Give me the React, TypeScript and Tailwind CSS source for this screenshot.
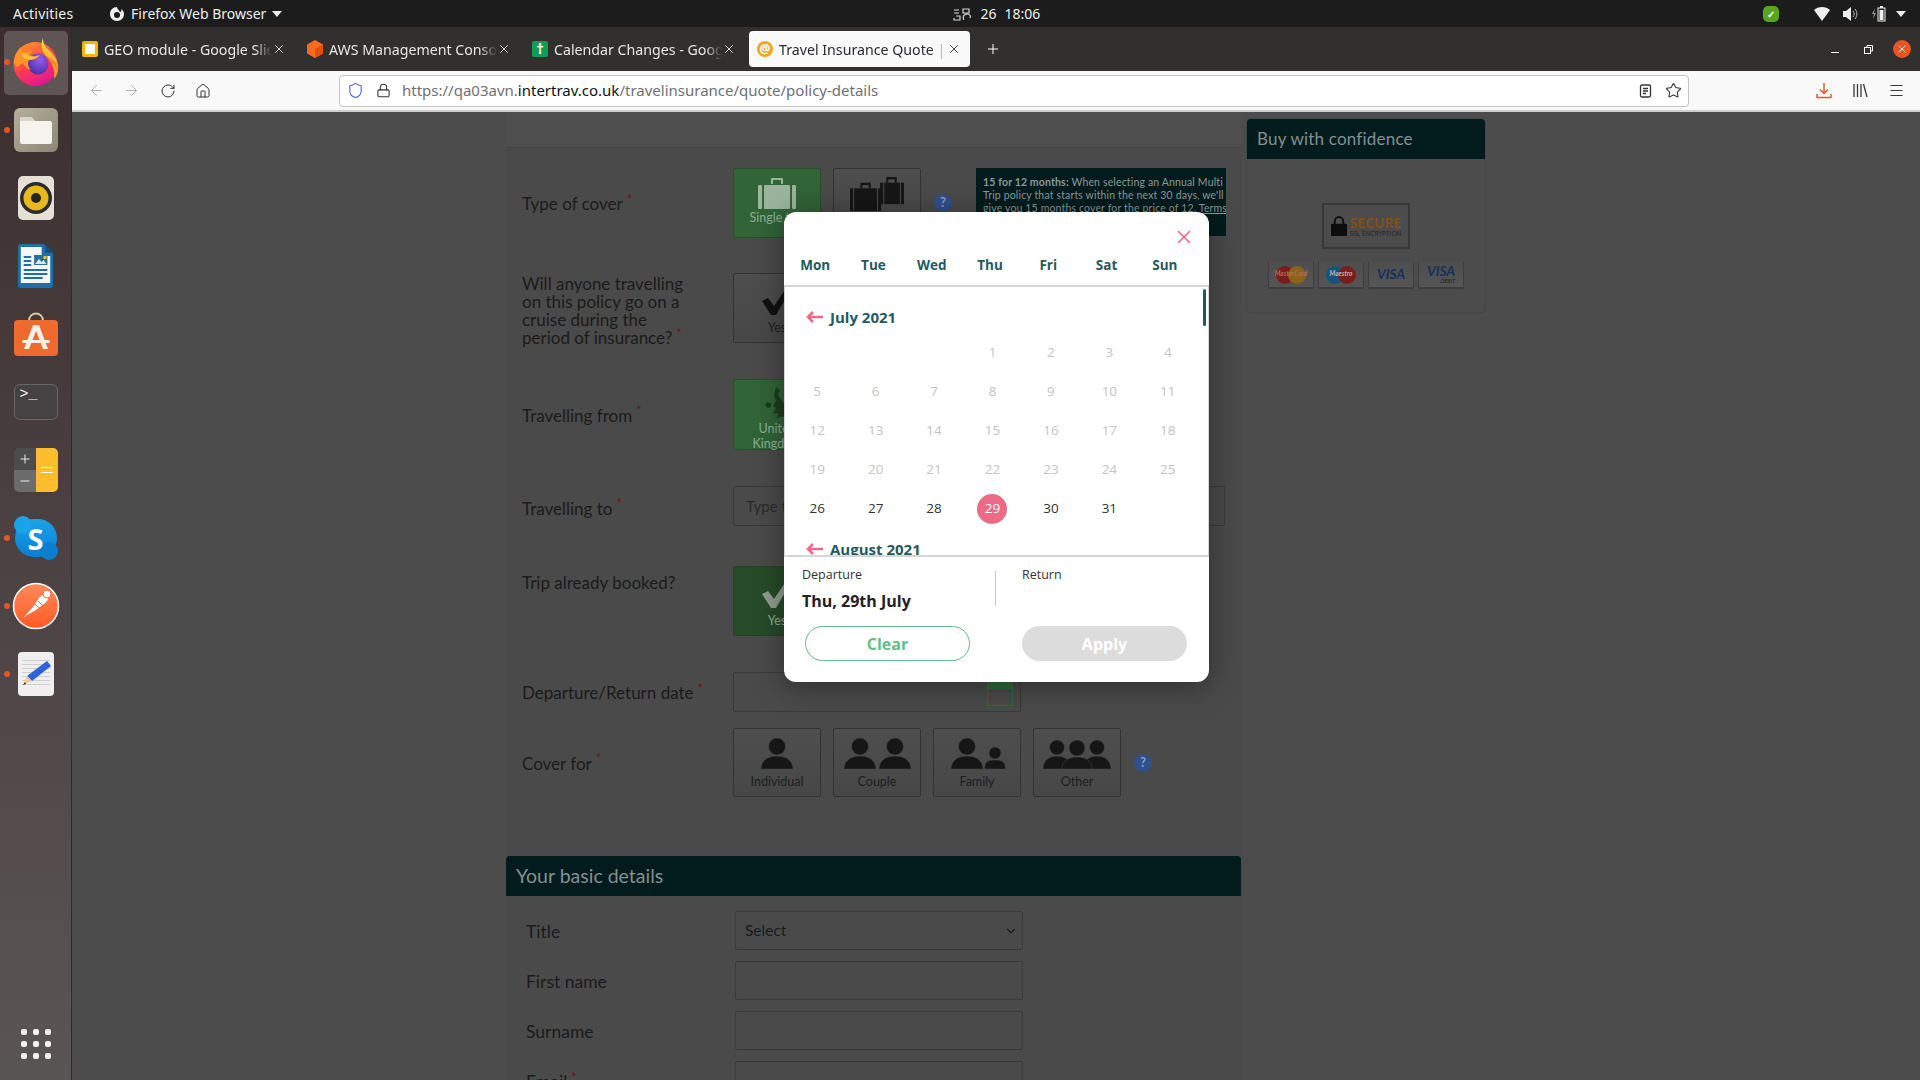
import { ReactNode } from "react";
import { ArrowLeft, ArrowRight, ChevronDown, House, Lock, Menu, Minus, Plus, RotateCw, Shield, Star, X } from "lucide-react";

const UI_FONT = "font-['Noto_Sans','Open_Sans',sans-serif]";
const SITE_FONT = "font-['Lato','Open_Sans',sans-serif]";
const MODAL_FONT = "font-['Open_Sans',sans-serif]";

function FirefoxIcon() {
  return (
    <svg width="46" height="50" viewBox="0 0 46 50">
      <defs>
        <linearGradient id="ffBody" x1="0.2" y1="0" x2="0.7" y2="1">
          <stop offset="0" stopColor="#ff9a1f" />
          <stop offset="0.5" stopColor="#ff3f4d" />
          <stop offset="1" stopColor="#e0119b" />
        </linearGradient>
        <radialGradient id="ffGlobe" cx="0.6" cy="0.3" r="0.8">
          <stop offset="0" stopColor="#8f5cf0" />
          <stop offset="1" stopColor="#4b2a9a" />
        </radialGradient>
        <linearGradient id="ffFlame" x1="0" y1="0" x2="0" y2="1">
          <stop offset="0" stopColor="#ffe23c" />
          <stop offset="1" stopColor="#ff9a1f" />
        </linearGradient>
      </defs>
      <circle cx="22.5" cy="27" r="22" fill="url(#ffBody)" />
      <path d="M30 1c0 7 3 10 8 14 5 5 8 11 7 19-1-7-5-12-11-14-5-5-7-12-4-19z" fill="url(#ffFlame)" />
      <path d="M34 20c6 3 10 8 11 14-1 3-2 6-4 8 1-8-1-15-7-22z" fill="#ff9a1f" />
      <circle cx="25" cy="27" r="10.500" fill="url(#ffGlobe)" />
      <path d="M1 26c0-7 3-12 7-16 0 3 0 5 2 6 3-2 7-2 10-1-2 1-4 3-5 4 4 1 8 0 12-1-2 4-7 5-11 5-2 3-1 7 2 10-4-1-7-4-8-7-2 1-4 2-5 4-2-1-3-2-4-4z" fill="#ff9428" />
      <path d="M8 17c3-1 6 0 9 2 3 1 6 1 8 0-3 3-7 4-11 3-2 0-4-2-6-5z" fill="#ffc040" />
    </svg>
  );
}

function FilesIcon() {
  return (
    <div className="flex h-[44px] w-[44px] items-center justify-center rounded-[6px] bg-linear-to-br from-[#b5b09c] to-[#8c8774]">
      <svg width="32" height="28" viewBox="0 0 32 28">
        <path d="M0 3a2 2 0 0 1 2-2h9l4 4h15a2 2 0 0 1 2 2v19a2 2 0 0 1-2 2H2a2 2 0 0 1-2-2z" fill="#f6f3ef" />
        <path d="M0 3a2 2 0 0 1 2-2h9l4 4H0z" fill="#d9d5cc" />
      </svg>
    </div>
  );
}

function RhythmboxIcon() {
  return (
    <div className="flex h-[44px] w-[36px] items-center justify-center rounded-[5px] bg-[#e5e1d6]">
      <svg width="32" height="32" viewBox="0 0 32 32">
        <circle cx="16" cy="16" r="16" fill="#2b2a30" />
        <circle cx="16" cy="16" r="12.5" fill="#e7b91e" />
        <circle cx="16" cy="16" r="5" fill="#26241f" />
      </svg>
    </div>
  );
}

function WriterIcon() {
  return (
    <svg width="36" height="44" viewBox="0 0 38 44" preserveAspectRatio="none">
      <path d="M3 0h24l10 10v31a3 3 0 0 1-3 3H3a3 3 0 0 1-3-3V3a3 3 0 0 1 3-3z" fill="#1c6fa8" />
      <path d="M3 3h22v9h9v27H3z" fill="#f4f6f7" />
      <path d="M29 0l9 9h-9z" fill="#14507c" />
      <rect x="6" y="12" width="8" height="2" fill="#1c6fa8" />
      <rect x="6" y="16" width="8" height="2" fill="#1c6fa8" />
      <rect x="6" y="20" width="8" height="2" fill="#1c6fa8" />
      <rect x="6" y="25" width="25" height="2" fill="#1c6fa8" />
      <rect x="6" y="29" width="25" height="2" fill="#1c6fa8" />
      <rect x="6" y="33" width="20" height="2" fill="#1c6fa8" />
      <rect x="17" y="11" width="14" height="10" fill="#2a6f99" />
      <path d="M18 20l4-5 3 3 2-2 3 4z" fill="#dbe7ee" />
      <rect x="27" y="12" width="3" height="3" fill="#f2c230" />
    </svg>
  );
}

function StoreIcon() {
  return (
    <svg width="44" height="44" viewBox="0 0 44 44">
      <path d="M15 9c0-10 14-10 14 0" fill="none" stroke="#d9c5a4" strokeWidth="2" />
      <rect y="8" width="44" height="36" rx="4" fill="#ee6a2f" />
      <path d="M19 13h6l9 24h-5l-7-18-7 18h-5z" fill="#fdeee6" />
      <rect x="8" y="28" width="28" height="3" rx="1.5" fill="#fdeee6" />
    </svg>
  );
}

function CalculatorIcon() {
  return (
    <div className="flex h-[44px] w-[44px] overflow-hidden rounded-[5px]">
      <div className="flex w-[22px] flex-col">
        <div className="flex h-[22px] items-center justify-center bg-[#4c4c4c] text-white"><Plus size={14} strokeWidth={1.5} /></div>
        <div className="flex h-[22px] items-center justify-center bg-[#6c6c6c] text-white"><Minus size={14} strokeWidth={1.5} /></div>
      </div>
      <div className="flex w-[22px] flex-col items-center justify-center gap-[4px] bg-[#fdbd2c]">
        <div className="h-px w-[12px] bg-white" />
        <div className="h-px w-[12px] bg-white" />
      </div>
    </div>
  );
}

function SkypeIcon() {
  return (
    <div className="relative flex h-[38px] w-[42px] items-center justify-center rounded-[19px] bg-linear-to-b from-[#1aa3e8] to-[#0a7fd0]">
      <div className="absolute left-[-1px] top-[-3px] h-[18px] w-[18px] rounded-full bg-[#1aa3e8]" />
      <div className="absolute bottom-[-3px] right-[-1px] h-[18px] w-[18px] rounded-full bg-[#0a7fd0]" />
      <span className="relative font-['Open_Sans',sans-serif] text-[29px] font-bold leading-none text-white">S</span>
    </div>
  );
}

function PostmanIcon() {
  return (
    <svg width="48" height="48" viewBox="0 0 48 48">
      <defs>
        <linearGradient id="pmBody" x1="0" y1="0" x2="0" y2="1">
          <stop offset="0" stopColor="#ff8a5c" />
          <stop offset="1" stopColor="#ff5a24" />
        </linearGradient>
      </defs>
      <circle cx="24" cy="24" r="22.5" fill="url(#pmBody)" stroke="#fff" strokeWidth="1.5" />
      <path d="M11 36l10-11 6-9c2-3 6-4 8-2 2 2 1 5-2 7l-9 7-9 5z" fill="#fff" />
      <circle cx="35" cy="12" r="4" fill="#fff" stroke="#ff6a35" strokeWidth="1" />
      <path d="M23 22l5 5M26 19l5 5" stroke="#ff6a35" strokeWidth="1" />
    </svg>
  );
}

function EditorIcon() {
  return (
    <div className="relative h-[44px] w-[36px] rounded-[4px] bg-[#efefef]">
      <svg width="36" height="44" viewBox="0 0 36 44">
        {[8, 12, 16, 20, 24, 28, 32].map((y) => (
          <rect key={y} x="4" y={y} width="28" height="1" fill="#cfcfcf" />
        ))}
        <path d="M29 9l4 5-19 15-5-5z" fill="#2f62d8" />
        <path d="M9 24l5 5-9 4z" fill="#f2c9a0" />
        <path d="M7 30l-2 3 3-1z" fill="#333" />
      </svg>
    </div>
  );
}

function DockSlot({ children, running, active }: { children: ReactNode; running?: boolean; active?: boolean }) {
  return (
    <div className="relative flex h-[68px] w-full items-center justify-center">
      {active && <div className="absolute left-[4px] top-[3px] h-[64px] w-[64px] rounded-[5px] bg-[#5f5555]" />}
      <div className="relative">{children}</div>
      {running && <div className="absolute left-[4px] top-[31px] h-[6px] w-[6px] rounded-full bg-[#e95420]" />}
    </div>
  );
}

function Dock() {
  return (
    <aside className="flex h-full w-[72px] shrink-0 flex-col border-r border-[#2e2a2a] bg-linear-to-b from-[#3b2d2e] via-[#4c4243] to-[#5a5555] pt-[1px] pb-[21px]">
      <DockSlot running active><FirefoxIcon /></DockSlot>
      <DockSlot running><FilesIcon /></DockSlot>
      <DockSlot><RhythmboxIcon /></DockSlot>
      <DockSlot><WriterIcon /></DockSlot>
      <DockSlot><StoreIcon /></DockSlot>
      <DockSlot>
        <div className="h-[36px] w-[44px] rounded-[6px] border border-[#6a6666] bg-[#444242] px-[5px] font-['Liberation_Mono',monospace] text-[15px] leading-[20px] text-white">
          &gt;_
        </div>
      </DockSlot>
      <DockSlot><CalculatorIcon /></DockSlot>
      <DockSlot running><SkypeIcon /></DockSlot>
      <DockSlot running><PostmanIcon /></DockSlot>
      <DockSlot running><EditorIcon /></DockSlot>
      <div className="mt-auto grid grid-cols-3 gap-[6px] self-center">
        {Array.from({ length: 9 }).map((_, i) => (
          <div key={i} className="h-[6px] w-[6px] rounded-[2px] bg-[#f2f0f0]" />
        ))}
      </div>
    </aside>
  );
}

function TopBar() {
  return (
    <header className={`flex h-[27px] shrink-0 items-center bg-[#1c1c1c] pl-[13px] pr-[14px] text-[14px] text-[#eeeeec] ${UI_FONT}`}>
      <span className="w-[96px] tracking-[0.2px]">Activities</span>
      <svg width="16" height="16" viewBox="0 0 16 16" className="mr-[6px]">
        <path d="M8 1c-4 0-7 3-7 7s3 7 7 7 7-3 7-7c0-2-1-4-3-5 1 2 0 3-1 3-1-2-3-3-3-5z" fill="#eeeeec" />
        <circle cx="8" cy="9" r="3" fill="#1c1c1c" />
      </svg>
      <span>Firefox Web Browser</span>
      <svg width="10" height="6" viewBox="0 0 10 6" className="ml-[6px]"><path d="M0 0h10L5 6z" fill="#eeeeec" /></svg>
      <svg width="20" height="16" viewBox="0 0 20 16" className="ml-[670px] mr-[8px]" fill="none" stroke="#d6d6d6" strokeWidth="1.2">
        <path d="M2 4h5M2 7h5M4 10h4v4H2v-2M11 3h6v4h-6zM12 14c-2-3 0-6 3-6s4 2 3 4" />
      </svg>
      <span className="w-[24px]">26</span>
      <span>18:06</span>
      <div className="ml-auto flex items-center">
        <div className="mr-[35px] flex h-[16px] w-[16px] items-center justify-center rounded-[5px] bg-[#5aa51e] text-[10px] font-bold leading-none text-white">✓</div>
        <svg width="16" height="14" viewBox="0 0 16 14" className="mr-[13px]"><path d="M0 3c4-4 12-4 16 0l-8 11z" fill="#eeeeec" /></svg>
        <svg width="15" height="14" viewBox="0 0 15 14" className="mr-[14px]" fill="none"><path d="M0 4h3l5-4v14l-5-4H0z" fill="#eeeeec" /><path d="M10 4c1.500 2 1.500 4 0 6M12 2c2.500 3 2.500 7 0 10" stroke="#bdbdbd" /></svg>
        <svg width="14" height="16" viewBox="0 0 14 16" className="mr-[8px]" fill="none"><path d="M3 2L0 8h2l-1 5 3-6H2z" fill="#9a9a9a" /><rect x="6" y="2" width="7" height="13" stroke="#eeeeec" /><rect x="8" y="0" width="3" height="2" fill="#eeeeec" /><rect x="7.500" y="4" width="4" height="10" fill="#eeeeec" /></svg>
        <svg width="10" height="6" viewBox="0 0 10 6" className="ml-[2px]"><path d="M0 0h10L5 6z" fill="#eeeeec" /></svg>
      </div>
    </header>
  );
}

const tabs = [
  { title: "GEO module - Google Slides", icon: <div className="h-[16px] w-[16px] rounded-[2px] border-[3px] border-[#f7b500] bg-white" /> },
  { title: "AWS Management Console", icon: <svg width="16" height="18" viewBox="0 0 16 18"><path d="M8 0l8 4.500v9L8 18l-8-4.500v-9z" fill="#ff6a1f" /><path d="M8 9l8-4.500v9L8 18z" fill="#e0500f" /></svg> },
  { title: "Calendar Changes - Google", icon: <div className="flex h-[16px] w-[16px] items-center justify-center rounded-[2px] bg-[#0f9d58] text-[14px] font-bold leading-none text-white">†</div> },
];

function Tab({ title, icon, active }: { title: string; icon: ReactNode; active?: boolean }) {
  return (
    <div className={`flex h-[36px] w-[221px] shrink-0 items-center pl-[8px] pr-[9px] ${active ? "rounded-[4px] bg-[#f9f9fa] text-[#2a2a2e]" : "text-[#e6e6e6]"}`}>
      <div className="flex w-[22px] shrink-0 items-center">{icon}</div>
      <span className="min-w-0 flex-1 overflow-hidden whitespace-nowrap pt-[1px] text-[14.2px] [mask-image:linear-gradient(to_right,black_90%,transparent)]">{title}</span>
      <X size={14} strokeWidth={1.5} className="shrink-0" />
    </div>
  );
}

function TabBar() {
  return (
    <div className={`flex h-[44px] items-center bg-[#322f2f] pl-[2px] ${UI_FONT}`}>
      <div className="flex gap-[4px]">
        {tabs.map((t) => (
          <Tab key={t.title} title={t.title} icon={t.icon} />
        ))}
        <Tab
          active
          title="Travel Insurance Quote | Compare"
          icon={<div className="flex h-[16px] w-[16px] items-center justify-center rounded-full bg-[#f5a623] text-[12px] font-bold leading-none text-white">@</div>}
        />
      </div>
      <Plus size={16} strokeWidth={1.5} className="ml-[15px] text-white" />
      <div className="ml-auto flex items-center pr-[9px] text-white">
        <div className="mr-[25px] mt-[6px] h-px w-[8px] bg-white" />
        <svg width="9" height="9" viewBox="0 0 9 9" className="mr-[20px]" fill="none" stroke="#fff"><rect x="0.500" y="2.500" width="6" height="6" /><path d="M3 2V.500h5.500V6H7" /></svg>
        <div className="flex h-[18px] w-[18px] items-center justify-center rounded-full bg-[#e95420]"><X size={12} strokeWidth={2} /></div>
      </div>
    </div>
  );
}

function NavBar() {
  return (
    <div className={`flex h-[41px] items-center border-b-2 border-[#cfcfcf] bg-[#f9f9fa] ${UI_FONT}`}>
      <ArrowLeft size={17} strokeWidth={1.25} className="ml-[16px] text-[#a8a8aa]" />
      <ArrowRight size={17} strokeWidth={1.25} className="ml-[18px] text-[#a8a8aa]" />
      <RotateCw size={16} strokeWidth={1.5} className="ml-[20px] text-[#333]" />
      <House size={16} strokeWidth={1.5} className="ml-[19px] text-[#333]" />
      <div className="ml-[128px] flex h-[32px] w-[1350px] items-center rounded-[4px] border border-[#c4c4c4] bg-white">
        <Shield size={17} strokeWidth={1.5} className="ml-[7px] text-[#4a5fd8]" />
        <Lock size={15} strokeWidth={1.75} className="ml-[12px] text-[#333]" />
        <span className="ml-[11px] whitespace-nowrap text-[15px] text-[#6f6f74]">
          https://qa03avn.<span className="text-[#111]">intertrav.co.uk</span>/travelinsurance/quote/policy-details
        </span>
        <svg width="13" height="14" viewBox="0 0 13 14" className="ml-auto mr-[13px]" fill="none" stroke="#333" strokeWidth="1.300"><rect x="1.500" y="1" width="10" height="12" rx="1.500" /><path d="M4 4.500h5M4 7h5M4 9.500h3" /></svg>
        <Star size={17} strokeWidth={1.5} className="mr-[6px] text-[#333]" />
      </div>
      <svg width="16" height="17" viewBox="0 0 16 17" className="ml-[127px]" fill="none" stroke="#e9582a" strokeWidth="1.500"><path d="M8 1v10M4 7.500L8 11.500 12 7.500M1 12v3.500h14V12" /></svg>
      <svg width="15" height="15" viewBox="0 0 15 15" className="ml-[21px]" fill="none" stroke="#3a3a3a" strokeWidth="1.300"><path d="M1 1v13M4.500 1v13M8 1v13M10.500 1l3.500 13" /></svg>
      <Menu size={17} strokeWidth={1.5} className="ml-[20px] text-[#3a3a3a]" />
    </div>
  );
}

function Req() {
  return <sup className="ml-[4px] text-[13px] text-[#7c0a12]">*</sup>;
}

function Suitcase({ fill }: { fill: string }) {
  return (
    <svg width="38" height="32" viewBox="0 0 38 32" fill={fill}>
      <path d="M13 7V2a1 1 0 0 1 1-1h10a1 1 0 0 1 1 1v5h-2V3h-8v4z" />
      <rect x="0" y="8" width="4" height="24" rx="1" />
      <rect x="6" y="8" width="26" height="24" rx="1" />
      <rect x="34" y="8" width="4" height="24" rx="1" />
    </svg>
  );
}

function TwoSuitcases() {
  return (
    <svg width="54" height="34" viewBox="0 0 52 30" preserveAspectRatio="none" fill="#161616">
      <path d="M35 5V0h10v5h-2V2h-6v3z" />
      <rect x="29" y="5" width="3" height="19" />
      <rect x="33" y="5" width="15" height="19" />
      <rect x="49" y="5" width="3" height="19" />
      <path d="M10 10V5h10v5h-2V7h-6v3z" />
      <rect x="0" y="10" width="3" height="20" />
      <rect x="4" y="10" width="22" height="20" />
      <rect x="27" y="10" width="3" height="20" />
    </svg>
  );
}

function Person({ x, r, top, w, fill = "#161616" }: { x: number; r: number; top: number; w: number; fill?: string }) {
  const bodyTop = top + r * 2 + 1;
  return (
    <g fill={fill} stroke="#4d4d4d" strokeWidth="0.5">
      <circle cx={x} cy={top + r} r={r} />
      <path d={`M${x - w / 2} 31c0-8 ${w * 0.2}-${31 - bodyTop} ${w / 2}-${31 - bodyTop}s${w / 2} ${31 - bodyTop - 8} ${w / 2} ${31 - bodyTop}z`} />
    </g>
  );
}

function People({ kind }: { kind: "individual" | "couple" | "family" | "other" }) {
  return (
    <svg width="70" height="32" viewBox="0 0 70 32">
      {kind === "individual" && <Person x={35} r={8.500} top={0} w={32} />}
      {kind === "couple" && (
        <>
          <Person x={18} r={8.500} top={0} w={32} />
          <Person x={53} r={8.500} top={0} w={32} />
        </>
      )}
      {kind === "family" && (
        <>
          <Person x={25} r={8.500} top={0} w={32} />
          <Person x={53} r={6} top={9} w={21} />
        </>
      )}
      {kind === "other" && (
        <>
          <Person x={15} r={7.500} top={2} w={28} />
          <Person x={55} r={7.500} top={2} w={28} />
          <Person x={35} r={8} top={2} w={30} />
        </>
      )}
    </svg>
  );
}

function Tile({ label, selected, dark, raised, children }: { label: string; selected?: boolean; dark?: boolean; raised?: boolean; children: ReactNode }) {
  const tone = selected
    ? `${dark ? "border-[#224424] bg-[#274b28]" : "border-[#274f2a] bg-[#316437]"} text-[#8fae8f]`
    : "border-[#333] bg-linear-to-b from-[#4e4e4e] to-[#474747] text-[#1e1e1e]";
  return (
    <div className={`flex h-full w-[88px] shrink-0 flex-col items-center justify-between rounded-[2px] border px-1 pt-[7px] text-center text-[12.5px] leading-[15px] ${raised ? "pb-[12px]" : "pb-[7px]"} ${tone}`}>
      <div className="flex h-[36px] items-center justify-center">{children}</div>
      <span>{label}</span>
    </div>
  );
}

function Help() {
  return <div className="flex h-[18px] w-[18px] shrink-0 items-center justify-center rounded-full bg-[#30508c] text-[13px] font-bold text-[#8d9dbd]">?</div>;
}

function Row({ label, className, labelClass = "pt-[2px]", align = "items-center", children }: { label: ReactNode; className: string; labelClass?: string; align?: string; children: ReactNode }) {
  return (
    <div className={`flex ${align} ${className}`}>
      <div className={`w-[211px] shrink-0 text-[17px] leading-[18px] text-[#1b1b1b] ${labelClass}`}>{label}</div>
      {children}
    </div>
  );
}

function Check({ color }: { color: string }) {
  return (
    <svg width="36" height="32" viewBox="0 0 36 32"><path d="M3 18l6-3 6 8L30 1h5L17 32h-5z" fill={color} /></svg>
  );
}

function DetailRow({ label, className, children }: { label: ReactNode; className: string; children?: ReactNode }) {
  return (
    <div className={`flex h-[39px] items-center pl-[20px] ${className}`}>
      <div className="w-[209px] shrink-0 pt-[4px] text-[17.5px] text-[#1b1b1b]">{label}</div>
      <div className="flex h-full w-[288px] items-center rounded-[2px] border border-[#3a3a3a] pl-[9px] pr-[10px] text-[15.5px] text-[#1b1b1b]">{children}</div>
    </div>
  );
}

function CardLogo({ children }: { children: ReactNode }) {
  return (
    <div className="relative flex h-[27px] w-[46px] items-center justify-center rounded-b-[2px] border-b-2 border-x border-[#3d3d3d] bg-linear-to-b from-[#4e4e4e] to-[#555]">
      {children}
    </div>
  );
}

function Sidebar() {
  return (
    <aside className="ml-[5px] mt-[6px] flex h-[195px] w-[240px] shrink-0 flex-col overflow-hidden rounded-[5px] border border-[#454545]">
      <div className="flex h-[40px] shrink-0 items-center bg-[#021c1e] pl-[10px] text-[17px] tracking-[0.2px] text-[#849090]">Buy with confidence</div>
      <div className="flex flex-1 flex-col items-center pt-[44px]">
        <div className="flex h-[46px] w-[88px] items-center justify-center gap-[3px] border-2 border-[#383838]">
          <svg width="16" height="20" viewBox="0 0 17 21"><path d="M3 9V5.500a5.500 5.500 0 0 1 11 0V9h-2V5.500a3.500 3.500 0 0 0-7 0V9z" fill="#0d0d0d" /><rect y="8" width="17" height="13" rx="1" fill="#0d0d0d" /></svg>
          <div className="flex flex-col font-['Open_Sans',sans-serif] leading-none">
            <span className="text-[14px] font-semibold leading-[14px] text-[#8a4f10]">SECURE</span>
            <span className="whitespace-nowrap text-[6.5px] leading-[7px] text-[#222]">SSL ENCRYPTION</span>
          </div>
        </div>
        <div className="mt-[13px] flex gap-[4px]">
          <CardLogo>
            <svg width="32" height="20" viewBox="0 0 32 20"><circle cx="10" cy="10" r="9" fill="#7d1c1c" /><circle cx="22" cy="10" r="9" fill="#8a6416" /></svg>
            <span className="absolute inset-x-0 top-[9px] text-center text-[6.5px] font-bold italic leading-none text-[#b06a5a]">MasterCard</span>
          </CardLogo>
          <CardLogo>
            <svg width="32" height="20" viewBox="0 0 32 20"><circle cx="10" cy="10" r="9" fill="#14557f" /><circle cx="22" cy="10" r="9" fill="#7d1c1c" /></svg>
            <span className="absolute inset-x-0 top-[9px] text-center text-[6.5px] font-bold italic leading-none text-[#b8b8b8]">Maestro</span>
          </CardLogo>
          <CardLogo><span className="text-[13.5px] font-bold italic text-[#14305e]">VISA</span></CardLogo>
          <CardLogo>
            <div className="flex flex-col items-center leading-none">
              <span className="text-[13.5px] font-bold italic text-[#14305e]">VISA</span>
              <span className="self-end text-[5.5px] italic text-[#222]">DEBIT</span>
            </div>
          </CardLogo>
        </div>
      </div>
    </aside>
  );
}

function PolicyForm() {
  return (
    <main className={`ml-[434px] w-[735px] shrink-0 bg-[#4a4a4a] ${SITE_FONT}`}>
      <div className="h-[36px] border-b border-[#444] bg-[#4e4e4e]" />
      <Row className="mt-[20px] h-[70px] pl-[16px]" label={<>Type of cover<Req /></>}>
        <div className="flex h-full gap-[12px]">
          <Tile label="Single trip" selected raised><Suitcase fill="#9ab59c" /></Tile>
          <Tile label="Annual"><TwoSuitcases /></Tile>
        </div>
        <div className="ml-[13px]"><Help /></div>
        <div className="ml-[24px] h-[68px] w-[250px] self-start overflow-hidden whitespace-nowrap bg-[#021c1e] pl-[7px] pt-[8px] text-[10.5px] leading-[13px] tracking-[0.15px] text-[#8c9a98]">
          <b>15 for 12 months:</b> When selecting an Annual Multi<br />
          Trip policy that starts within the next 30 days, we'll<br />
          give you 15 months cover for the price of 12. <u>Terms</u>
        </div>
      </Row>
      <Row
        className="mt-[35px] h-[70px] pl-[16px]"
        align="items-start"
        labelClass="pt-[2px]"
        label={<>Will anyone travelling<br />on this policy go on a<br />cruise during the<br />period of insurance?<Req /></>}
      >
        <Tile label="Yes"><Check color="#111" /></Tile>
      </Row>
      <Row className="mt-[36px] h-[71px] pl-[16px]" label={<>Travelling from<Req /></>}>
        <Tile label="United Kingdom" selected>
          <svg width="26" height="34" viewBox="0 0 26 34"><path d="M12 0l4 3-2 5 4 6 5 6 2 5-4 4-9 2 3-4-6-1 3-5-3-2 3-5-2-5 1-5zM3 15l4 1 0 4-4 1-2-3z" fill="#1c3d20" /></svg>
        </Tile>
      </Row>
      <Row className="mt-[36px] h-[40px] pl-[16px]" labelClass="pt-[5px]" label={<>Travelling to<Req /></>}>
        <div className="flex h-full w-[492px] items-center rounded-[2px] border border-[#3a3a3a] px-[12px] text-[15px] text-[#2a2a2a]">Type to search</div>
      </Row>
      <Row className="mt-[40px] h-[70px] pl-[16px]" align="items-start" labelClass="pt-[8px]" label="Trip already booked?">
        <Tile label="Yes" selected dark><Check color="#8f9f8f" /></Tile>
      </Row>
      <Row className="mt-[36px] h-[40px] pl-[16px]" label={<>Departure/Return date<Req /></>}>
        <div className="flex h-full w-[288px] items-center justify-end rounded-[2px] border border-[#3a3a3a] pr-[7px]">
          <div className="h-[28px] w-[26px] border border-[#2f6b3a]"><div className="h-[10px] bg-[#2f6b3a]" /></div>
        </div>
      </Row>
      <Row className="mt-[16px] h-[69px] pl-[16px]" label={<>Cover for<Req /></>}>
        <div className="flex h-full gap-[12px]">
          <Tile label="Individual"><People kind="individual" /></Tile>
          <Tile label="Couple"><People kind="couple" /></Tile>
          <Tile label="Family"><People kind="family" /></Tile>
          <Tile label="Other"><People kind="other" /></Tile>
        </div>
        <div className="ml-[13px]"><Help /></div>
      </Row>
      <div className="mt-[59px] flex h-[40px] items-center rounded-t-[4px] bg-[#021c1e] pb-[1px] pl-[10px] text-[19.5px] text-[#849090]">Your basic details</div>
      <DetailRow className="mt-[15px]" label="Title">
        <span className="flex-1">Select</span>
        <ChevronDown size={14} strokeWidth={2} className="-mr-[6px]" />
      </DetailRow>
      <DetailRow className="mt-[11px]" label="First name" />
      <DetailRow className="mt-[11px]" label="Surname" />
      <DetailRow className="mt-[11px]" label={<>Email<Req /></>} />
    </main>
  );
}

const WEEK_DAYS = ["Mon", "Tue", "Wed", "Thu", "Fri", "Sat", "Sun"];

function MonthTitle({ name }: { name: string }) {
  return (
    <div className="flex h-[20px] items-center pl-[21px] text-[15px] font-bold text-[#1f5a5f]">
      <svg width="17" height="12" viewBox="0 0 17 12" fill="none" stroke="#ef6a85" strokeWidth="2.500"><path d="M17 6H2M7 1L2 6l5 5" /></svg>
      <span className="ml-[7px]">{name}</span>
    </div>
  );
}

function DatePicker() {
  const july: (number | null)[] = [null, null, null, ...Array.from({ length: 31 }, (_, i) => i + 1)];
  return (
    <div className={`absolute left-[712px] top-[100px] flex h-[470px] w-[425px] flex-col overflow-hidden rounded-[12px] bg-white shadow-[0_4px_30px_rgba(0,0,0,0.4)] ${MODAL_FONT}`}>
      <div className="flex h-[36px] shrink-0 items-end justify-end pr-[14px]">
        <X size={22} strokeWidth={1.75} className="text-[#ef6a85]" />
      </div>
      <div className="grid h-[39px] shrink-0 grid-cols-7 items-center border-b-2 border-[#d6d6d6] pb-[3px] pl-[2px] pr-[15px] text-center text-[13.5px] font-bold text-[#1f5a5f]">
        {WEEK_DAYS.map((d) => (
          <span key={d}>{d}</span>
        ))}
      </div>
      <div className="relative h-[268px] shrink-0 overflow-hidden border-x border-[#d6d6d6] pt-[20px]">
        <div className="absolute right-[2px] top-[2px] h-[37px] w-[3px] rounded-[2px] bg-[#1f5a5f]" />
        <MonthTitle name="July 2021" />
        <div className="mt-[6px] grid grid-cols-7 pl-[3px] pr-[11px] text-center text-[13.5px]">
          {july.map((day, i) => (
            <div key={i} className="flex h-[39px] items-center justify-center">
              {day === 29 ? (
                <span className="flex h-[30px] w-[30px] items-center justify-center rounded-full bg-[#ec6a85] text-white">29</span>
              ) : (
                day !== null && <span className={day >= 26 ? "text-[#333]" : "text-[#c4c4c4]"}>{day}</span>
              )}
            </div>
          ))}
        </div>
        <div className="mt-[11px]"><MonthTitle name="August 2021" /></div>
      </div>
      <div className="flex flex-1 flex-col border-t-2 border-[#d6d6d6]">
        <div className="flex h-[69px] pt-[14px] text-[#333]">
          <div className="h-[35px] w-[212px] border-r border-[#c8c8c8] pl-[18px]">
            <div className="-mt-[2px] text-[12.5px] leading-[12px]">Departure</div>
            <div className="mt-[9px] whitespace-nowrap text-[16px] font-bold leading-[22px] text-[#222]">Thu, 29th July</div>
          </div>
          <div className="-mt-[2px] pl-[26px] text-[12.5px] leading-[12px]">Return</div>
        </div>
        <div className="flex justify-between pl-[21px] pr-[22px]">
          <button className="h-[35px] w-[165px] rounded-full border border-[#5fbf87] bg-white text-[16px] font-bold text-[#5fbf87]">Clear</button>
          <button className="h-[35px] w-[165px] rounded-full bg-[#dcdcdc] text-[16px] font-bold text-white">Apply</button>
        </div>
      </div>
    </div>
  );
}

export default function App() {
  return (
    <div className="flex h-screen w-screen flex-col overflow-hidden bg-[#4c4c4c]">
      <TopBar />
      <div className="flex min-h-0 flex-1">
        <Dock />
        <div className="flex min-w-0 flex-1 flex-col">
          <TabBar />
          <NavBar />
          <div className="relative flex min-h-0 flex-1 overflow-hidden bg-[#4c4c4c]">
            <PolicyForm />
            <div className={SITE_FONT}><Sidebar /></div>
            <DatePicker />
          </div>
        </div>
      </div>
    </div>
  );
}
